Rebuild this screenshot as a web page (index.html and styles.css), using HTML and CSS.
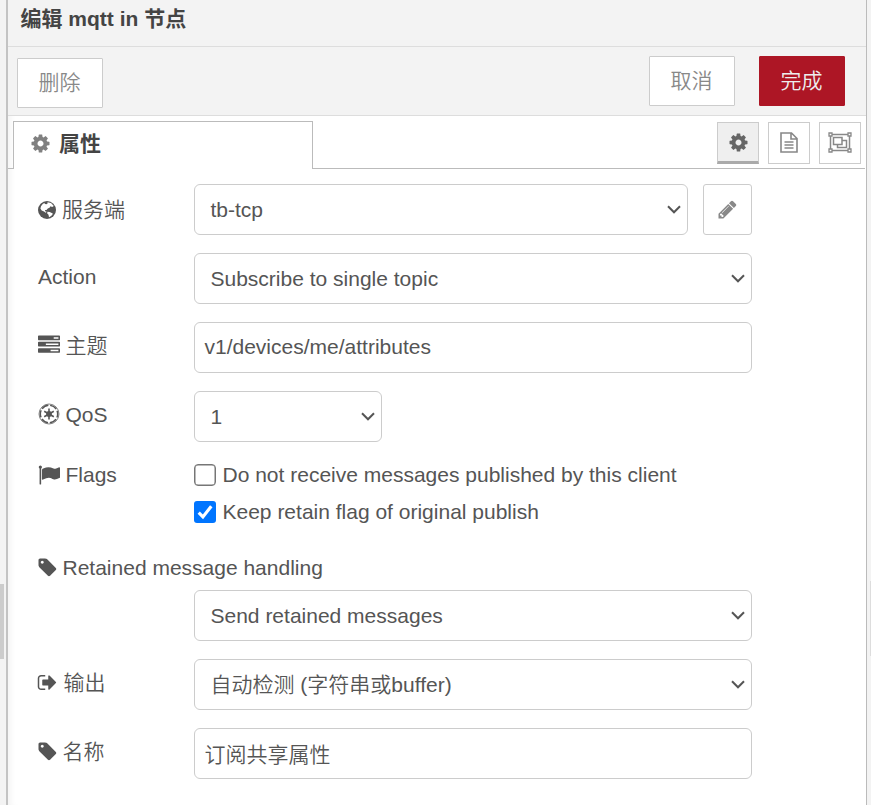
FILE: index.html
```html
<!DOCTYPE html>
<html lang="zh-CN">
<head>
<meta charset="utf-8">
<title>编辑 mqtt in 节点</title>
<link rel="stylesheet" href="styles.css">
</head>
<body>
<svg class="defs" aria-hidden="true">
  <symbol id="cog" viewBox="0 0 1792 1792"><path d="M1152 896q0-106-75-181t-181-75-181 75-75 181 75 181 181 75 181-75 75-181zm512-109v222q0 12-8 23t-20 13l-185 28q-19 54-39 91 35 50 107 138 10 12 10 25t-9 23q-27 37-99 108t-94 71q-12 0-26-9l-138-108q-44 23-91 38-16 136-29 186-7 28-36 28h-222q-14 0-24.500-8.500t-11.500-21.500l-28-184q-49-16-90-37l-141 107q-10 9-25 9-14 0-25-11-126-114-165-168-7-10-7-23 0-12 8-23 15-21 51-66.500t54-70.500q-27-50-41-99l-183-27q-13-2-21-12.500t-8-23.500v-222q0-12 8-23t19-13l186-28q14-46 39-92-40-57-107-138-10-12-10-24 0-10 9-23 26-36 98.500-107.500t94.500-71.500q13 0 26 10l138 107q44-23 91-38 16-136 29-186 7-28 36-28h222q14 0 24.500 8.500t11.500 21.500l28 184q49 16 90 37l142-107q9-9 24-9 13 0 25 10 129 119 165 170 7 8 7 22 0 12-8 23-15 21-51 66.500t-54 70.500q26 50 41 98l183 28q13 2 21 12.500t8 23.500z"/></symbol>
  <symbol id="file" viewBox="0 0 18 21"><g fill="none" stroke="currentColor" stroke-width="1.600"><path d="M1 1h10.500l5.500 5.500V20H1zM11 1v6h6"/><path d="M4.500 10h9M4.500 13h9M4.500 16h9" stroke-width="1.300"/></g></symbol>
  <symbol id="pencil" viewBox="0 0 1792 1792"><path d="M491 1536l91-91-235-235-91 91v107h128v128h107zm523-928q0-22-22-22-10 0-17 7l-542 542q-7 7-7 17 0 22 22 22 10 0 17-7l542-542q7-7 7-17zm-54-192l416 416-832 832h-416v-416zm683 96q0 53-37 90l-166 166-416-416 166-165q36-38 90-38 53 0 91 38l235 234q37 39 37 91z"/></symbol>
  <symbol id="tag" viewBox="0 0 1792 1792"><path d="M576 448q0-53-37.500-90.500t-90.500-37.500-90.500 37.500-37.500 90.500 37.500 90.500 90.500 37.500 90.500-37.500 37.500-90.500zm1067 576q0 53-37 90l-491 492q-39 37-91 37-53 0-90-37l-715-716q-38-37-64.500-101t-26.500-117v-416q0-52 38-90t90-38h416q53 0 117 26.500t102 64.500l715 714q37 39 37 91z"/></symbol>
  <symbol id="tasks" viewBox="0 0 1792 1792"><path d="M1024 1408h640v-128h-640v128zm-384-512h1024v-128h-1024v128zm640-512h384v-128h-384v128zm512 832v256q0 26-19 45t-45 19h-1664q-26 0-45-19t-19-45v-256q0-26 19-45t45-19h1664q26 0 45 19t19 45zm0-512v256q0 26-19 45t-45 19h-1664q-26 0-45-19t-19-45v-256q0-26 19-45t45-19h1664q26 0 45 19t19 45zm0-512v256q0 26-19 45t-45 19h-1664q-26 0-45-19t-19-45v-256q0-26 19-45t45-19h1664q26 0 45 19t19 45z"/></symbol>
  <symbol id="flag" viewBox="0 0 1792 1792"><path d="M320 256q0 72-64 110v1266q0 13-9.500 22.500t-22.500 9.500h-64q-13 0-22.500-9.500t-9.500-22.500v-1266q-64-38-64-110 0-53 37.500-90.500t90.500-37.500 90.500 37.500 37.500 90.500zm1472 64v763q0 25-12.500 38.500t-39.500 27.500q-215 116-369 116-61 0-123.500-22t-108.500-48-115.500-48-142.500-22q-192 0-464 146-17 9-33 9-26 0-45-19t-19-45v-742q0-32 31-55 21-14 79-43 236-120 421-120 107 0 200 29t219 88q38 19 88 19 54 0 117.500-21t110-47 88-47 54.500-21q26 0 45 19t19 45z"/></symbol>
  <symbol id="out" viewBox="0 0 1792 1792"><path d="M704 1440q0 4 1 20t.5 26.500-3 23.500-10 19.500-20.500 6.500h-320q-119 0-203.500-84.500t-84.500-203.500v-704q0-119 84.500-203.500t203.500-84.500h320q13 0 22.500 9.500t9.500 22.500q0 4 1 20t.5 26.500-3 23.500-10 19.500-20.500 6.500h-320q-66 0-113 47t-47 113v704q0 66 47 113t113 47h312l11.500 1 11.500 3 8 5.500 7 9 2 13.500zm928-544q0 26-19 45l-544 544q-19 19-45 19t-45-19-19-45v-288h-448q-26 0-45-19t-19-45v-384q0-26 19-45t45-19h448v-288q0-26 19-45t45-19 45 19l544 544q19 19 19 45z"/></symbol>
  <symbol id="globe" viewBox="0 0 18 18"><circle cx="9" cy="9" r="9"/><path class="land" d="M9.500 1.300 13 2l2.800 3-1.600.9-1.700-.6-1 1.400-1.700.7-1.300 1.700-1.500 0 .2 1.200 1.500.5-1 .9-1.700-1.300-2.300-1-1.300-2 .6-2.200 1.700-2.200 1.500-.9.900 1 1.300.2 1.200-.9zM9.500 10.800l2.200.1 3.100 1.500-.6 1.700-1.900 1.500-1.300.7-.5-2.500-1.400-1.500z"/></symbol>
  <symbol id="empire" viewBox="0 0 22 22"><circle cx="11" cy="11" r="10" fill="none" stroke="currentColor" stroke-width="1" opacity=".7"/><circle cx="11" cy="11" r="8.700" fill="none" stroke="currentColor" stroke-width="1.500" stroke-dasharray="7.300 1.811" stroke-dashoffset="3.650"/><circle cx="11" cy="11" r="2.900"/><path d="M11 5.500v11M6.200 8.250l9.600 5.500M6.200 13.750l9.600-5.500" stroke="currentColor" stroke-width="1.600"/></symbol>
  <symbol id="group" viewBox="0 0 24 21"><g fill="none" stroke="currentColor" stroke-width="1.500"><path d="M2.500 4v13M21.500 4v13M4 2.500h16M4 18.500h16"/><path d="M1 1h3v3H1zM20 1h3v3h-3zM1 17h3v3H1zM20 17h3v3h-3z" stroke-width="1.300"/><path d="M5.500 5.500h8.500v7H5.500zM14.500 8.500h4v7h-9v-3"/></g></symbol>
  <symbol id="chevron" viewBox="0 0 14 9"><path d="M1 1.300 7 7.300l6-6" fill="none" stroke="currentColor" stroke-width="2"/></symbol>
</svg>
<div class="workspace">
  <div class="gutter"><span class="handle"></span></div>
  <main class="tray">
    <header class="title">编辑 mqtt in 节点</header>
    <div class="toolbar">
      <button class="btn delete">删除</button>
      <button class="btn">取消</button>
      <button class="btn primary">完成</button>
    </div>
    <nav class="tabs">
      <div class="tab"><svg class="icon"><use href="#cog"/></svg>属性</div>
      <div class="tab-buttons">
        <button class="tool active"><svg class="icon"><use href="#cog"/></svg></button>
        <button class="tool"><svg class="icon file"><use href="#file"/></svg></button>
        <button class="tool"><svg class="icon group"><use href="#group"/></svg></button>
      </div>
    </nav>
    <form class="form">
      <div class="row server">
        <label><svg class="icon globe"><use href="#globe"/></svg>服务端</label>
        <div class="field select"><span>tb-tcp</span><svg class="chevron"><use href="#chevron"/></svg></div>
        <button type="button" class="edit"><svg class="icon"><use href="#pencil"/></svg></button>
      </div>
      <div class="row">
        <label>Action</label>
        <div class="field select"><span>Subscribe to single topic</span><svg class="chevron"><use href="#chevron"/></svg></div>
      </div>
      <div class="row">
        <label><svg class="icon wide"><use href="#tasks"/></svg>主题</label>
        <div class="field">v1/devices/me/attributes</div>
      </div>
      <div class="row">
        <label><svg class="icon wide"><use href="#empire"/></svg>QoS</label>
        <div class="field select short"><span>1</span><svg class="chevron"><use href="#chevron"/></svg></div>
      </div>
      <div class="flags">
        <label><svg class="icon wide"><use href="#flag"/></svg>Flags</label>
        <div class="checks">
          <div class="check"><span class="box"></span>Do not receive messages published by this client</div>
          <div class="check"><span class="box checked"><svg viewBox="0 0 21 21"><path d="M4.500 11.200 8.500 15.200 16.500 5"/></svg></span>Keep retain flag of original publish</div>
        </div>
      </div>
      <div class="retained">
        <label><svg class="icon"><use href="#tag"/></svg>Retained message handling</label>
        <div class="field select"><span>Send retained messages</span><svg class="chevron"><use href="#chevron"/></svg></div>
      </div>
      <div class="row">
        <label><svg class="icon out"><use href="#out"/></svg>输出</label>
        <div class="field select"><span>自动检测 (字符串或buffer)</span><svg class="chevron"><use href="#chevron"/></svg></div>
      </div>
      <div class="row">
        <label><svg class="icon"><use href="#tag"/></svg>名称</label>
        <div class="field cjk">订阅共享属性</div>
      </div>
    </form>
  </main>
  <div class="gutter right"><span class="handle"></span></div>
</div>
</body>
</html>
```
FILE: styles.css
```css
* { box-sizing: border-box; }
body {
  margin: 0;
  font: 350 21px/30px "Liberation Sans", "Noto Sans CJK SC", sans-serif;
  color: #555;
  background: #f3f3f3;
}
.defs { display: none; }
button { font: inherit; padding: 0; margin: 0; color: #888; }
.workspace { display: flex; height: 805px; overflow: hidden; }
.gutter { flex: 0 0 6px; display: flex; align-items: flex-start; background: #f3f3f3; }
.gutter .handle { width: 4px; height: 75px; margin-top: 584px; background: #ccc; }
.gutter.right { flex-basis: 4px; justify-content: flex-end; }
.gutter.right .handle { width: 1px; margin-top: 581px; background: #ddd; }
.tray {
  flex: 1;
  border-left: 2px solid #c3c3c3;
  border-right: 1px solid #bbb;
  background: #fff;
  box-shadow: inset 7px 0 7px -5px rgba(0, 0, 0, .06);
}
.title {
  height: 47px;
  padding: 4px 0 0 12.5px;
  border-bottom: 1px solid #ddd;
  background: #f3f3f3;
  color: #444;
  font-weight: bold;
}
.toolbar {
  display: flex;
  gap: 24px;
  height: 69px;
  padding: 9px 21px 0 9px;
  border-bottom: 1px solid #ddd;
  background: #f3f3f3;
}
.btn { width: 86px; height: 50px; padding-right: 1px; border: 1px solid #ccc; border-radius: 1px; background: #fff; }
.delete { margin: 2px auto 0 0; }
.primary { background: #ad1625; border-color: #ad1625; color: #eee; }
.tabs {
  display: flex;
  justify-content: space-between;
  height: 53px;
  padding: 5px 5px 0;
  background: linear-gradient(#bbb, #bbb) 0 100% / calc(100% - 1px) 1px no-repeat;
}
.tab {
  display: flex;
  align-items: center;
  width: 300px;
  height: 48px;
  padding: 0 0 4px 17px;
  border: 1px solid #bbb;
  border-bottom: 0;
  background: #fff;
  color: #444;
  font-weight: bold;
}
.icon { flex: none; width: 21px; height: 21px; fill: currentColor; }
.tab .icon { color: #808080; margin-right: 8px; margin-left: -1px; }
.tab-buttons { display: flex; gap: 9px; padding-top: 1px; }
.tool {
  display: flex;
  align-items: center;
  justify-content: center;
  width: 42px;
  height: 42px;
  border: 1px solid #ccc;
  background: #fff;
}
.tool.active { background: #efefef; color: #666; border-bottom: 3px solid #aaa; }
.icon.group { width: 24px; margin-bottom: 1px; }
.icon.file { width: 18px; margin-bottom: 1px; }
.form { display: flex; flex-direction: column; gap: 18px; padding: 15px 114px 0 30px; }
.row, .retained { display: grid; grid-template-columns: 156px 1fr auto; align-items: center; }
.row label, .flags label, .retained label { display: flex; align-items: center; white-space: nowrap; }
.row label { padding-bottom: 4px; }
.row.server label { padding-bottom: 0; }
label .icon { margin-right: 4.5px; margin-left: -1px; margin-bottom: 1px; }
label .globe { width: 18px; height: 18px; margin: 0 6px 0 0; }
.land { fill: #fff; }
label .wide { width: 22px; height: 22px; margin: 0 5.5px 1px 0; }
label .out { margin-right: 5.5px; }
.field {
  display: flex;
  align-items: center;
  height: 51px;
  padding: 0 10px 1px 9.5px;
  border: 1px solid #ccc;
  border-radius: 6px;
  background: #fff;
}
.select { justify-content: space-between; padding: 0 6px 0 15.5px; }
.cjk { padding-top: 2px; padding-bottom: 0; }
.short { width: 188px; }
.chevron { width: 14px; height: 9px; }
.edit {
  display: flex;
  align-items: center;
  justify-content: center;
  width: 49px;
  height: 51px;
  margin-left: 15px;
  border: 1px solid #ccc;
  border-radius: 3px;
  background: #fff;
}
.flags { display: grid; grid-template-columns: 156px 1fr; align-items: start; }
.checks { display: flex; flex-direction: column; gap: 7px; }
.check { display: flex; align-items: center; white-space: nowrap; }
.box { width: 22px; height: 22px; margin-right: 6.5px; border: 1.5px solid #767676; border-radius: 4px; box-shadow: inset 0 0 0 .5px #767676; }
.checked { border: 0; border-radius: 3px; background: #0075ff; box-shadow: none; }
.checked svg { display: block; width: 22px; height: 22px; fill: none; stroke: #fff; stroke-width: 3; }
.retained { padding-top: 8px; row-gap: 7px; }
.retained label { grid-column: 1 / -1; }
.retained .field { grid-column: 2 / -1; }
```
